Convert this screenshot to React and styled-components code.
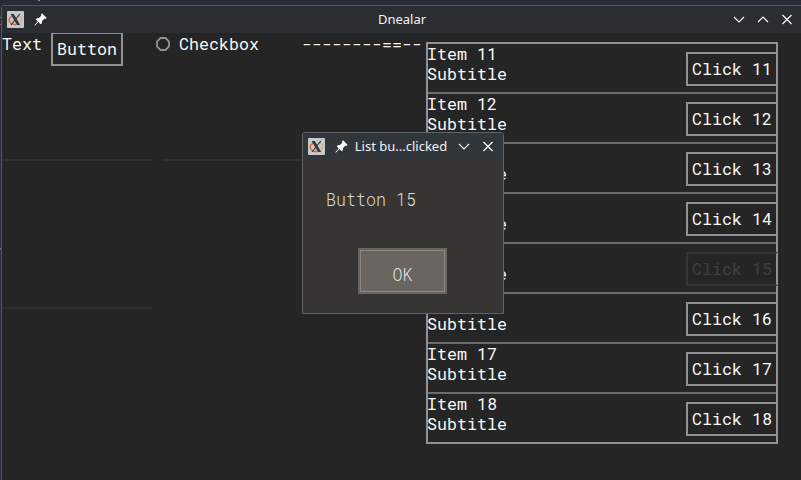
import React from 'react';
import styled, { createGlobalStyle } from 'styled-components';

const Global = createGlobalStyle`
  * { box-sizing: border-box; }
  html, body { margin: 0; height: 100%; overflow: hidden; background: #282d38; }
`;

const Desktop = styled.div`
  width: 801px;
  height: 480px;
  padding: 5px 0 0 1px;
  overflow: hidden;
  background:
    linear-gradient(#8b8f96, #8b8f96) 38px 0 / 2px 1px no-repeat,
    linear-gradient(#a5673f, #a5673f) 0 17px / 1px 1px no-repeat,
    linear-gradient(#a5673f, #a5673f) 0 24px / 1px 1px no-repeat,
    linear-gradient(#7a5a8c, #7a5a8c) 0 248px / 1px 2px no-repeat,
    linear-gradient(#282c38, #2a2e3a);
  font-family: "Roboto Mono", "Liberation Mono", monospace;
  font-size: 16.667px;
  line-height: 20px;
  color: #f8f8f8;
  white-space: pre;
`;

const MainWindow = styled.main`
  width: 801px;
  height: 476px;
  background: #252525;
  border: 1px solid #54585e;
  border-radius: 3px 0 0 0;
  overflow: hidden;
`;

const TitleBar = styled.header`
  display: grid;
  grid-template-columns: ${(p) => (p.$compact ? '17px 32px 1fr 24px 24px' : '17px 32px 1fr 24px 24px 24px')};
  align-items: center;
  height: 27px;
  padding: 0 ${(p) => (p.$compact ? 3 : 2)}px 0 5px;
  background: ${(p) => (p.$compact ? '#31363b' : '#2a2e32')};
  color: #f2f3f3;
`;

const Title = styled.div`
  font: 13px/18px "Noto Sans", sans-serif;
  text-align: center;
  margin-top: -2px;
  margin-left: ${(p) => p.$shift || 0}px;
`;

const Icon = styled.svg`
  display: block;
  justify-self: center;
`;

const Content = styled.div`
  display: grid;
  grid-template-columns: 150px 140px 114px 352px;
  column-gap: 10px;
  overflow: hidden;
`;

const Controls = styled.div`
  display: flex;
  align-items: flex-start;
  height: 126px;
`;

const Divider = styled.hr`
  width: ${(p) => p.$width}px;
  height: 2px;
  margin: 0;
  border: 0;
  background: #303030;
`;

const Column = styled.section`
  display: flex;
  flex-direction: column;
  gap: ${(p) => p.$gap || 0}px;
  margin-left: ${(p) => p.$pull || 0}px;
`;

const Label = styled.span`
  padding-top: 1px;
`;

const BoxButton = styled.button`
  font: inherit;
  color: ${(p) => (p.disabled ? '#404040' : 'inherit')};
  background: transparent;
  border: 2px solid ${(p) => (p.disabled ? '#353535' : '#929292')};
  border-right-color: ${(p) => (p.disabled ? 'transparent' : '#929292')};
  padding: 5px 0 5px 4px;
  text-align: left;
  height: 34px;
  width: ${(p) => p.$width}px;
  margin: 0;
  flex: none;
`;

const ButtonSlot = styled.div`
  margin: -1px 0 0 9px;
`;

const List = styled.section`
  width: 352px;
  height: 402px;
  margin: 9px 0 0 0;
  border: 2px solid #929292;
`;

const ListRow = styled.div`
  display: flex;
  justify-content: space-between;
  height: ${(p) => (p.$last ? 48 : 50)}px;
  padding-top: 8px;
  margin-right: -2px;
  background: linear-gradient(#6c6c6c, #6c6c6c) 0 48px / calc(100% - 2px) 2px no-repeat;
`;

const ItemText = styled.div`
  margin: -8px 0 0 -1px;
`;

const Dialog = styled.section`
  position: absolute;
  left: 302px;
  top: 132px;
  width: 202px;
  height: 182px;
  display: flex;
  flex-direction: column;
  background: #373533;
  border: 1px solid #5f6367;
  border-radius: 3px 3px 0 0;
  overflow: hidden;
`;

const Message = styled.div`
  color: #dcdbda;
  font-weight: 300;
  margin: 30px 0 0 23px;
  transform: scaleY(1.08);
`;

const OkButton = styled.button`
  width: 89px;
  height: 46px;
  margin: 38px 0 0 55px;
  padding: 7px 0 0;
  font: inherit;
  font-weight: 300;
  color: #e6e4e2;
  background: #6a6561;
  border: 2px solid #6a6561;
  box-shadow: inset 0 0 0 1px #8d8780;
  text-align: center;
`;

const OkText = styled.span`
  display: block;
  transform: scaleY(1.08);
`;

const CheckMark = styled(Icon)`
  margin: 4px 9px 0 -6px;
  flex: none;
`;

const XLogo = () => (
  <Icon width="17" height="17" viewBox="0 0 17 17">
    <rect width="17" height="17" rx="1" fill="#c3c9cc" />
    <path d="M6 5.2C3.2 6 1.8 7.8 2.2 10C2.8 12.8 6.5 14 9.5 13.2" fill="none" stroke="#e8602c" strokeWidth="1.4" />
    <path d="M9.5 13.2C13 12.6 15.2 10.4 14.8 8C14.5 6.2 12.8 5 10.5 4.8" fill="none" stroke="#e9a866" strokeWidth="1.1" />
    <path d="M3.6 3H6.8L13.2 14H10Z" fill="#34383b" />
    <path d="M12.8 3L4 14" stroke="#34383b" strokeWidth="1.2" />
  </Icon>
);

const Pin = () => (
  <Icon width="13" height="13" viewBox="0 0 12 12" fill="#fcfcfc">
    <path d="M7.4 0.3L11.7 4.6L10.7 5.4L9.5 5.4L7.5 7.4L7.2 9.4L6.2 10.3L4.1 8.4L0.7 11.7L0.3 11.3L3.4 7.8L1.6 5.8L2.6 4.8L4.6 4.5L6.6 2.5L6.6 1.2Z" />
  </Icon>
);

const Glyph = ({ d }) => (
  <Icon width="12" height="12" viewBox="0 0 12 12" fill="none" stroke="#fcfcfc" strokeWidth="1.1">
    <path d={d} />
  </Icon>
);

const DOWN = 'M1 3L6 8L11 3';
const UP = 'M1 8L6 3L11 8';
const CLOSE = 'M1.5 1L10.5 10M10.5 1L1.5 10';
const ITEMS = [11, 12, 13, 14, 15, 16, 17, 18];

export default function App() {
  return (
    <>
      <Global />
      <Desktop>
        <MainWindow>
          <TitleBar>
            <XLogo />
            <Pin />
            <Title $shift={21}>Dnealar</Title>
            <Glyph d={DOWN} />
            <Glyph d={UP} />
            <Glyph d={CLOSE} />
          </TitleBar>
          <Content>
            <Column $gap={146}>
              <Column>
                <Controls>
                  <Label>Text</Label>
                  <ButtonSlot>
                    <BoxButton $width={72}>Button</BoxButton>
                  </ButtonSlot>
                </Controls>
                <Divider $width={150} />
              </Column>
              <Divider $width={150} />
            </Column>
            <Column>
              <Controls>
                <CheckMark width="14" height="14" viewBox="0 0 14 14">
                  <path d="M4.5 1H9.5L13 4.5V9.5L9.5 13H4.5L1 9.5V4.5Z" fill="none" stroke="#929292" strokeWidth="1.8" />
                </CheckMark>
                <Label>Checkbox</Label>
              </Controls>
              <Divider $width={140} />
            </Column>
            <Column $pull={-10}>
              <Label>--------==--</Label>
            </Column>
            <Column $pull={-10}>
              <List>
                {ITEMS.map((n) => (
                  <ListRow key={n} $last={n === 18}>
                    <ItemText>
                      <div>Item {n}</div>
                      <div>Subtitle</div>
                    </ItemText>
                    <BoxButton $width={92} disabled={n === 15}>Click {n}</BoxButton>
                  </ListRow>
                ))}
              </List>
            </Column>
          </Content>
        </MainWindow>
        <Dialog>
          <TitleBar $compact>
            <XLogo />
            <Pin />
            <Title $shift={-7}>List bu...clicked</Title>
            <Glyph d={DOWN} />
            <Glyph d={CLOSE} />
          </TitleBar>
          <Message>Button 15</Message>
          <OkButton>
            <OkText>OK</OkText>
          </OkButton>
        </Dialog>
      </Desktop>
    </>
  );
}
